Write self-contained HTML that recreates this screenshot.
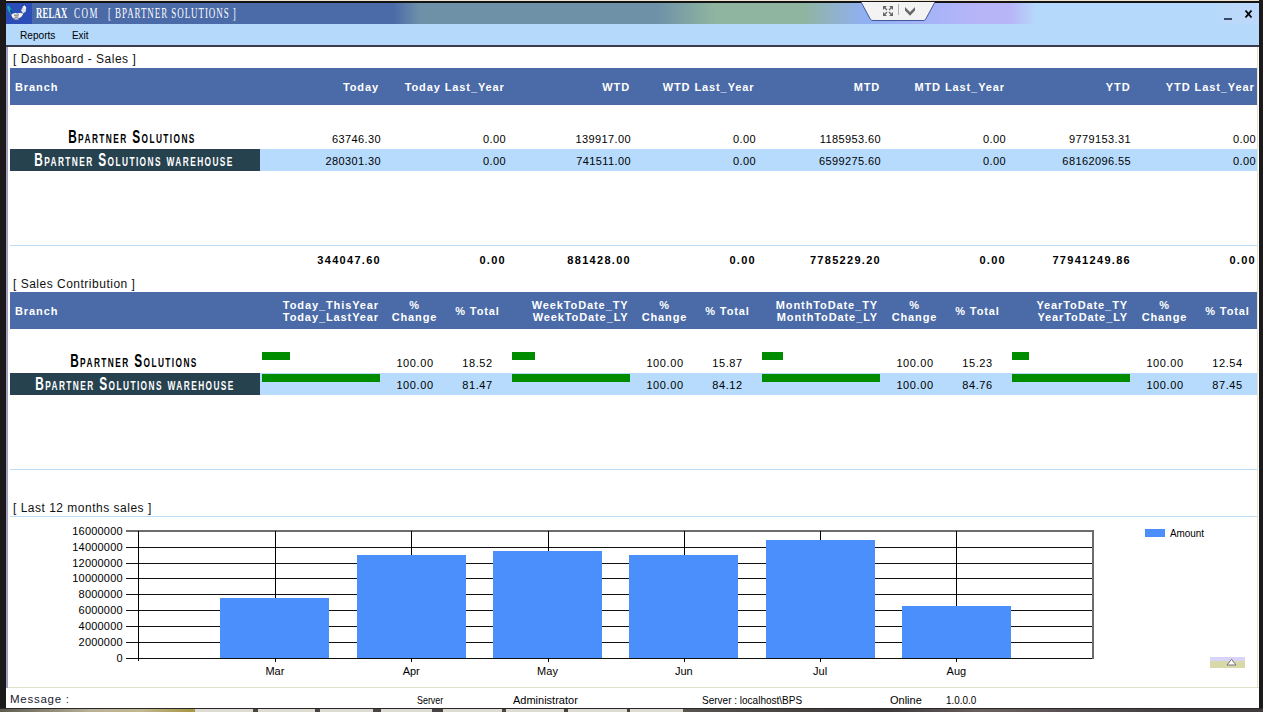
<!DOCTYPE html>
<html><head><meta charset="utf-8">
<style>
*{margin:0;padding:0;box-sizing:border-box}
html,body{width:1263px;height:712px;overflow:hidden;background:#fff;font-family:"Liberation Sans",sans-serif}
.a{position:absolute}
.t{white-space:pre}
</style></head><body>
<div class="a" style="left:0px;top:0px;width:1263px;height:1px;background:#ece4d0;"></div>
<div class="a" style="left:0px;top:1px;width:1263px;height:2px;background:#141414;"></div>
<div class="a" style="left:0px;top:0px;width:6px;height:712px;background:#1b1919;"></div>
<div class="a" style="left:1259px;top:0px;width:4px;height:712px;background:#1b1919;"></div>
<div class="a" style="left:6px;top:3px;width:1253px;height:21px;background:linear-gradient(90deg,#4a6aa8 0px,#4a6aa8 387px,#6e91a8 414px,#6e91a8 650px,#8fb5a0 709px,#8fb5a0 798px,#90b0f0 856px,#a8b4f8 930px,#b8b4f8 974px,#b8b4f8 1004px,#b5d9fb 1030px,#b5d9fb 1205px,#bcd8fa 1225px);"></div>
<div class="a" style="left:6px;top:3px;width:26px;height:21px;background:#2b4db8;"></div>
<svg class="a" style="left:6px;top:3px" width="26" height="21" viewBox="0 0 26 21">
<path d="M1 3.5 L3 2.4 L5 5.5 L6.8 9 L6 11.5 L3.5 9.5 L1.5 6 Z" fill="#18a8c0"/>
<path d="M4.5 6 L6.8 9 L6 11 L4.2 8.5 Z" fill="#103870"/>
<path d="M15 7.5 L17 3.5 L18.6 2.4 L20.2 4.8 L19.8 8.6 L17.2 10.6 Z" fill="#e0e0ea"/>
<path d="M17 3.5 L18.6 2.4 L20.2 4.8 L18.5 6 Z" fill="#f8f8ff"/>
<path d="M14.6 9.6 L17.2 10.4 L16.6 12 L14.2 11.2 Z" fill="#d8c848"/>
<path d="M5.2 11.8 Q8 9.2 11.5 10.4 Q14.5 9.4 17 11.2 Q16 14.2 12.2 15.6 Q8.4 16.2 6.4 14.4 Z" fill="#f6f6f6"/>
<path d="M8 12.2 L13 12 M8.6 14.2 L12.4 14" stroke="#505050" stroke-width="0.9"/>
<path d="M7.5 15.6 Q10 17.4 12.5 16.4" stroke="#a89898" stroke-width="1" fill="none"/>
</svg>
<div class="a t" style="left:36px;transform-origin:0 0;top:5.73px;font-size:14.5px;line-height:14.5px;font-weight:bold;font-family:'Liberation Serif',serif;color:#fff;transform:scaleX(0.6);letter-spacing:0.35px;">RELAX</div>
<div class="a t" style="left:74px;transform-origin:0 0;top:5.73px;font-size:14.5px;line-height:14.5px;font-weight:normal;font-family:'Liberation Serif',serif;color:#fff;transform:scaleX(0.62);letter-spacing:2.4px;">COM</div>
<div class="a t" style="left:108px;transform-origin:0 0;top:5.73px;font-size:14.5px;line-height:14.5px;font-weight:normal;font-family:'Liberation Serif',serif;color:#fff;transform:scaleX(0.62);letter-spacing:1.5px;">[ BPARTNER SOLUTIONS ]</div>
<svg class="a" style="left:858px;top:1px" width="80" height="22" viewBox="0 0 80 22">
<path d="M3 1 L77 1 L67.5 18.5 Q66.5 19.5 65 19.5 L15 19.5 Q13.5 19.5 12.5 18.5 Z" fill="#f3f3f3"/>
<path d="M3 1 L12.5 18.5 Q13.5 19.5 15 19.5 L65 19.5 Q66.5 19.5 67.5 18.5 L77 1" fill="none" stroke="#304a90" stroke-width="0.9"/>
<g fill="#686868">
<path d="M25 5 L29 5 L25 9 Z"/><path d="M35 5 L31 5 L35 9 Z"/><path d="M25 15 L29 15 L25 11 Z"/><path d="M35 15 L31 15 L35 11 Z"/>
</g>
<g stroke="#686868" stroke-width="1.3">
<path d="M26 6 L29 9 M34 6 L31 9 M26 14 L29 11 M34 14 L31 11"/>
</g>
<path d="M40.5 3 L40.5 14" stroke="#b0b0b0" stroke-width="1"/>
<path d="M47 6 L52 11 L57 6 L57 9.5 L52 14.8 L47 9.5 Z" fill="#686868"/>
</svg>
<div class="a" style="left:1224px;top:18px;width:8px;height:2px;background:#3a4868;"></div>
<svg class="a" style="left:1244px;top:9px" width="9" height="10" viewBox="0 0 9 10"><path d="M1.5 1.5 L7.5 8.5 M7.5 1.5 L1.5 8.5" stroke="#000" stroke-width="1.9"/></svg>
<div class="a" style="left:6px;top:24px;width:1253px;height:21px;background:#b5d9fb;"></div>
<div class="a" style="left:6px;top:45px;width:1253px;height:2px;background:#3c3c4c;"></div>
<div class="a t" style="left:20px;transform-origin:0 0;top:29.689999999999998px;font-size:11px;line-height:11px;font-weight:normal;font-family:'Liberation Sans',sans-serif;color:#000;transform:scaleX(0.92);">Reports</div>
<div class="a t" style="left:72px;transform-origin:0 0;top:29.689999999999998px;font-size:11px;line-height:11px;font-weight:normal;font-family:'Liberation Sans',sans-serif;color:#000;transform:scaleX(0.9);">Exit</div>
<div class="a" style="left:6px;top:47px;width:2px;height:641px;background:#a0a0bc;"></div>
<div class="a" style="left:1257px;top:47px;width:1px;height:641px;background:#e4e4cc;"></div>
<div class="a" style="left:1258px;top:47px;width:1px;height:661px;background:#fcfcfc;"></div>
<div class="a t" style="left:13px;transform-origin:0 0;top:52.84px;font-size:12px;line-height:12px;font-weight:normal;font-family:'Liberation Sans',sans-serif;color:#111;letter-spacing:0.5px;">[ Dashboard - Sales ]</div>
<div class="a" style="left:10px;top:68px;width:1247px;height:37px;background:#4a6aa8;"></div>
<div class="a t" style="left:15px;transform-origin:0 0;top:81.69px;font-size:11px;line-height:11px;font-weight:bold;font-family:'Liberation Sans',sans-serif;color:#fff;letter-spacing:0.9px;">Branch</div>
<div class="a t" style="right:884px;transform-origin:100% 0;top:81.69px;font-size:11px;line-height:11px;font-weight:bold;font-family:'Liberation Sans',sans-serif;color:#fff;letter-spacing:0.9px;">Today</div>
<div class="a t" style="right:758.2px;transform-origin:100% 0;top:81.69px;font-size:11px;line-height:11px;font-weight:bold;font-family:'Liberation Sans',sans-serif;color:#fff;letter-spacing:0.9px;">Today Last_Year</div>
<div class="a t" style="right:633px;transform-origin:100% 0;top:81.69px;font-size:11px;line-height:11px;font-weight:bold;font-family:'Liberation Sans',sans-serif;color:#fff;letter-spacing:0.9px;">WTD</div>
<div class="a t" style="right:508.5px;transform-origin:100% 0;top:81.69px;font-size:11px;line-height:11px;font-weight:bold;font-family:'Liberation Sans',sans-serif;color:#fff;letter-spacing:0.9px;">WTD Last_Year</div>
<div class="a t" style="right:382.79999999999995px;transform-origin:100% 0;top:81.69px;font-size:11px;line-height:11px;font-weight:bold;font-family:'Liberation Sans',sans-serif;color:#fff;letter-spacing:0.9px;">MTD</div>
<div class="a t" style="right:258px;transform-origin:100% 0;top:81.69px;font-size:11px;line-height:11px;font-weight:bold;font-family:'Liberation Sans',sans-serif;color:#fff;letter-spacing:0.9px;">MTD Last_Year</div>
<div class="a t" style="right:132.5px;transform-origin:100% 0;top:81.69px;font-size:11px;line-height:11px;font-weight:bold;font-family:'Liberation Sans',sans-serif;color:#fff;letter-spacing:0.9px;">YTD</div>
<div class="a t" style="right:8.400000000000091px;transform-origin:100% 0;top:81.69px;font-size:11px;line-height:11px;font-weight:bold;font-family:'Liberation Sans',sans-serif;color:#fff;letter-spacing:0.9px;">YTD Last_Year</div>
<div class="a" style="left:10px;top:149px;width:1247px;height:22px;background:#b7dbfd;"></div>
<div class="a" style="left:10px;top:149px;width:250px;height:22px;background:#27424f;"></div>
<div class="a t" style="right:882px;transform-origin:100% 0;top:133.69px;font-size:11px;line-height:11px;font-weight:normal;font-family:'Liberation Sans',sans-serif;color:#000;letter-spacing:0.4px;">63746.30</div>
<div class="a t" style="right:882px;transform-origin:100% 0;top:155.69px;font-size:11px;line-height:11px;font-weight:normal;font-family:'Liberation Sans',sans-serif;color:#000;letter-spacing:0.4px;">280301.30</div>
<div class="a t" style="right:882px;transform-origin:100% 0;top:254.69px;font-size:11px;line-height:11px;font-weight:bold;font-family:'Liberation Sans',sans-serif;color:#000;letter-spacing:1.3px;">344047.60</div>
<div class="a t" style="right:757px;transform-origin:100% 0;top:133.69px;font-size:11px;line-height:11px;font-weight:normal;font-family:'Liberation Sans',sans-serif;color:#000;letter-spacing:0.4px;">0.00</div>
<div class="a t" style="right:757px;transform-origin:100% 0;top:155.69px;font-size:11px;line-height:11px;font-weight:normal;font-family:'Liberation Sans',sans-serif;color:#000;letter-spacing:0.4px;">0.00</div>
<div class="a t" style="right:757px;transform-origin:100% 0;top:254.69px;font-size:11px;line-height:11px;font-weight:bold;font-family:'Liberation Sans',sans-serif;color:#000;letter-spacing:1.3px;">0.00</div>
<div class="a t" style="right:632px;transform-origin:100% 0;top:133.69px;font-size:11px;line-height:11px;font-weight:normal;font-family:'Liberation Sans',sans-serif;color:#000;letter-spacing:0.4px;">139917.00</div>
<div class="a t" style="right:632px;transform-origin:100% 0;top:155.69px;font-size:11px;line-height:11px;font-weight:normal;font-family:'Liberation Sans',sans-serif;color:#000;letter-spacing:0.4px;">741511.00</div>
<div class="a t" style="right:632px;transform-origin:100% 0;top:254.69px;font-size:11px;line-height:11px;font-weight:bold;font-family:'Liberation Sans',sans-serif;color:#000;letter-spacing:1.3px;">881428.00</div>
<div class="a t" style="right:507px;transform-origin:100% 0;top:133.69px;font-size:11px;line-height:11px;font-weight:normal;font-family:'Liberation Sans',sans-serif;color:#000;letter-spacing:0.4px;">0.00</div>
<div class="a t" style="right:507px;transform-origin:100% 0;top:155.69px;font-size:11px;line-height:11px;font-weight:normal;font-family:'Liberation Sans',sans-serif;color:#000;letter-spacing:0.4px;">0.00</div>
<div class="a t" style="right:507px;transform-origin:100% 0;top:254.69px;font-size:11px;line-height:11px;font-weight:bold;font-family:'Liberation Sans',sans-serif;color:#000;letter-spacing:1.3px;">0.00</div>
<div class="a t" style="right:382px;transform-origin:100% 0;top:133.69px;font-size:11px;line-height:11px;font-weight:normal;font-family:'Liberation Sans',sans-serif;color:#000;letter-spacing:0.4px;">1185953.60</div>
<div class="a t" style="right:382px;transform-origin:100% 0;top:155.69px;font-size:11px;line-height:11px;font-weight:normal;font-family:'Liberation Sans',sans-serif;color:#000;letter-spacing:0.4px;">6599275.60</div>
<div class="a t" style="right:382px;transform-origin:100% 0;top:254.69px;font-size:11px;line-height:11px;font-weight:bold;font-family:'Liberation Sans',sans-serif;color:#000;letter-spacing:1.3px;">7785229.20</div>
<div class="a t" style="right:257px;transform-origin:100% 0;top:133.69px;font-size:11px;line-height:11px;font-weight:normal;font-family:'Liberation Sans',sans-serif;color:#000;letter-spacing:0.4px;">0.00</div>
<div class="a t" style="right:257px;transform-origin:100% 0;top:155.69px;font-size:11px;line-height:11px;font-weight:normal;font-family:'Liberation Sans',sans-serif;color:#000;letter-spacing:0.4px;">0.00</div>
<div class="a t" style="right:257px;transform-origin:100% 0;top:254.69px;font-size:11px;line-height:11px;font-weight:bold;font-family:'Liberation Sans',sans-serif;color:#000;letter-spacing:1.3px;">0.00</div>
<div class="a t" style="right:132px;transform-origin:100% 0;top:133.69px;font-size:11px;line-height:11px;font-weight:normal;font-family:'Liberation Sans',sans-serif;color:#000;letter-spacing:0.4px;">9779153.31</div>
<div class="a t" style="right:132px;transform-origin:100% 0;top:155.69px;font-size:11px;line-height:11px;font-weight:normal;font-family:'Liberation Sans',sans-serif;color:#000;letter-spacing:0.4px;">68162096.55</div>
<div class="a t" style="right:132px;transform-origin:100% 0;top:254.69px;font-size:11px;line-height:11px;font-weight:bold;font-family:'Liberation Sans',sans-serif;color:#000;letter-spacing:1.3px;">77941249.86</div>
<div class="a t" style="right:7px;transform-origin:100% 0;top:133.69px;font-size:11px;line-height:11px;font-weight:normal;font-family:'Liberation Sans',sans-serif;color:#000;letter-spacing:0.4px;">0.00</div>
<div class="a t" style="right:7px;transform-origin:100% 0;top:155.69px;font-size:11px;line-height:11px;font-weight:normal;font-family:'Liberation Sans',sans-serif;color:#000;letter-spacing:0.4px;">0.00</div>
<div class="a t" style="right:7px;transform-origin:100% 0;top:254.69px;font-size:11px;line-height:11px;font-weight:bold;font-family:'Liberation Sans',sans-serif;color:#000;letter-spacing:1.3px;">0.00</div>
<div class="a t" style="left:131.75px;transform-origin:50% 0;top:128.04px;font-size:18.5px;line-height:18.5px;font-weight:bold;font-family:'Liberation Sans',sans-serif;color:#000;transform:translateX(-50%) scaleX(0.64);letter-spacing:2.2px;font-variant:small-caps;">Bpartner Solutions</div>
<div class="a t" style="left:133.5px;transform-origin:50% 0;top:150.64000000000001px;font-size:18.5px;line-height:18.5px;font-weight:bold;font-family:'Liberation Sans',sans-serif;color:#fff;transform:translateX(-50%) scaleX(0.64);letter-spacing:2.2px;font-variant:small-caps;">Bpartner Solutions warehouse</div>
<div class="a" style="left:10px;top:245px;width:1247px;height:1px;background:#bcdcf6;"></div>
<div class="a t" style="left:13px;transform-origin:0 0;top:277.84px;font-size:12px;line-height:12px;font-weight:normal;font-family:'Liberation Sans',sans-serif;color:#111;letter-spacing:0.5px;">[ Sales Contribution ]</div>
<div class="a" style="left:10px;top:292px;width:1247px;height:37px;background:#4a6aa8;"></div>
<div class="a t" style="left:15px;transform-origin:0 0;top:305.69px;font-size:11px;line-height:11px;font-weight:bold;font-family:'Liberation Sans',sans-serif;color:#fff;letter-spacing:0.9px;">Branch</div>
<div class="a" style="left:10px;top:373px;width:1247px;height:22px;background:#b7dbfd;"></div>
<div class="a" style="left:10px;top:373px;width:250px;height:22px;background:#27424f;"></div>
<div class="a t" style="right:884px;transform-origin:100% 0;top:300.19px;font-size:11px;line-height:11px;font-weight:bold;font-family:'Liberation Sans',sans-serif;color:#fff;letter-spacing:0.9px;">Today_ThisYear</div>
<div class="a t" style="right:884px;transform-origin:100% 0;top:312.19px;font-size:11px;line-height:11px;font-weight:bold;font-family:'Liberation Sans',sans-serif;color:#fff;letter-spacing:0.9px;">Today_LastYear</div>
<div class="a t" style="left:414.5px;transform-origin:50% 0;top:300.19px;font-size:11px;line-height:11px;font-weight:bold;font-family:'Liberation Sans',sans-serif;color:#fff;transform:translateX(-50%) scaleX(1.0);letter-spacing:0.9px;">%</div>
<div class="a t" style="left:414.5px;transform-origin:50% 0;top:312.19px;font-size:11px;line-height:11px;font-weight:bold;font-family:'Liberation Sans',sans-serif;color:#fff;transform:translateX(-50%) scaleX(1.0);letter-spacing:0.9px;">Change</div>
<div class="a t" style="left:477.5px;transform-origin:50% 0;top:306.39px;font-size:11px;line-height:11px;font-weight:bold;font-family:'Liberation Sans',sans-serif;color:#fff;transform:translateX(-50%) scaleX(1.0);letter-spacing:0.9px;">% Total</div>
<div class="a" style="left:262px;top:352px;width:28px;height:8px;background:#008c00;"></div>
<div class="a" style="left:262px;top:374px;width:118px;height:8px;background:#008c00;"></div>
<div class="a t" style="left:415px;transform-origin:50% 0;top:357.69px;font-size:11px;line-height:11px;font-weight:normal;font-family:'Liberation Sans',sans-serif;color:#000;transform:translateX(-50%) scaleX(1.0);letter-spacing:0.6px;">100.00</div>
<div class="a t" style="left:477.5px;transform-origin:50% 0;top:357.69px;font-size:11px;line-height:11px;font-weight:normal;font-family:'Liberation Sans',sans-serif;color:#000;transform:translateX(-50%) scaleX(1.0);letter-spacing:0.6px;">18.52</div>
<div class="a t" style="left:415px;transform-origin:50% 0;top:379.69px;font-size:11px;line-height:11px;font-weight:normal;font-family:'Liberation Sans',sans-serif;color:#000;transform:translateX(-50%) scaleX(1.0);letter-spacing:0.6px;">100.00</div>
<div class="a t" style="left:477.5px;transform-origin:50% 0;top:379.69px;font-size:11px;line-height:11px;font-weight:normal;font-family:'Liberation Sans',sans-serif;color:#000;transform:translateX(-50%) scaleX(1.0);letter-spacing:0.6px;">81.47</div>
<div class="a t" style="right:634.5px;transform-origin:100% 0;top:300.19px;font-size:11px;line-height:11px;font-weight:bold;font-family:'Liberation Sans',sans-serif;color:#fff;letter-spacing:0.9px;">WeekToDate_TY</div>
<div class="a t" style="right:634.5px;transform-origin:100% 0;top:312.19px;font-size:11px;line-height:11px;font-weight:bold;font-family:'Liberation Sans',sans-serif;color:#fff;letter-spacing:0.9px;">WeekToDate_LY</div>
<div class="a t" style="left:664.5px;transform-origin:50% 0;top:300.19px;font-size:11px;line-height:11px;font-weight:bold;font-family:'Liberation Sans',sans-serif;color:#fff;transform:translateX(-50%) scaleX(1.0);letter-spacing:0.9px;">%</div>
<div class="a t" style="left:664.5px;transform-origin:50% 0;top:312.19px;font-size:11px;line-height:11px;font-weight:bold;font-family:'Liberation Sans',sans-serif;color:#fff;transform:translateX(-50%) scaleX(1.0);letter-spacing:0.9px;">Change</div>
<div class="a t" style="left:727.5px;transform-origin:50% 0;top:306.39px;font-size:11px;line-height:11px;font-weight:bold;font-family:'Liberation Sans',sans-serif;color:#fff;transform:translateX(-50%) scaleX(1.0);letter-spacing:0.9px;">% Total</div>
<div class="a" style="left:512px;top:352px;width:23px;height:8px;background:#008c00;"></div>
<div class="a" style="left:512px;top:374px;width:118px;height:8px;background:#008c00;"></div>
<div class="a t" style="left:665px;transform-origin:50% 0;top:357.69px;font-size:11px;line-height:11px;font-weight:normal;font-family:'Liberation Sans',sans-serif;color:#000;transform:translateX(-50%) scaleX(1.0);letter-spacing:0.6px;">100.00</div>
<div class="a t" style="left:727.5px;transform-origin:50% 0;top:357.69px;font-size:11px;line-height:11px;font-weight:normal;font-family:'Liberation Sans',sans-serif;color:#000;transform:translateX(-50%) scaleX(1.0);letter-spacing:0.6px;">15.87</div>
<div class="a t" style="left:665px;transform-origin:50% 0;top:379.69px;font-size:11px;line-height:11px;font-weight:normal;font-family:'Liberation Sans',sans-serif;color:#000;transform:translateX(-50%) scaleX(1.0);letter-spacing:0.6px;">100.00</div>
<div class="a t" style="left:727.5px;transform-origin:50% 0;top:379.69px;font-size:11px;line-height:11px;font-weight:normal;font-family:'Liberation Sans',sans-serif;color:#000;transform:translateX(-50%) scaleX(1.0);letter-spacing:0.6px;">84.12</div>
<div class="a t" style="right:385px;transform-origin:100% 0;top:300.19px;font-size:11px;line-height:11px;font-weight:bold;font-family:'Liberation Sans',sans-serif;color:#fff;letter-spacing:0.9px;">MonthToDate_TY</div>
<div class="a t" style="right:385px;transform-origin:100% 0;top:312.19px;font-size:11px;line-height:11px;font-weight:bold;font-family:'Liberation Sans',sans-serif;color:#fff;letter-spacing:0.9px;">MonthToDate_LY</div>
<div class="a t" style="left:914.5px;transform-origin:50% 0;top:300.19px;font-size:11px;line-height:11px;font-weight:bold;font-family:'Liberation Sans',sans-serif;color:#fff;transform:translateX(-50%) scaleX(1.0);letter-spacing:0.9px;">%</div>
<div class="a t" style="left:914.5px;transform-origin:50% 0;top:312.19px;font-size:11px;line-height:11px;font-weight:bold;font-family:'Liberation Sans',sans-serif;color:#fff;transform:translateX(-50%) scaleX(1.0);letter-spacing:0.9px;">Change</div>
<div class="a t" style="left:977.5px;transform-origin:50% 0;top:306.39px;font-size:11px;line-height:11px;font-weight:bold;font-family:'Liberation Sans',sans-serif;color:#fff;transform:translateX(-50%) scaleX(1.0);letter-spacing:0.9px;">% Total</div>
<div class="a" style="left:762px;top:352px;width:21px;height:8px;background:#008c00;"></div>
<div class="a" style="left:762px;top:374px;width:118px;height:8px;background:#008c00;"></div>
<div class="a t" style="left:915px;transform-origin:50% 0;top:357.69px;font-size:11px;line-height:11px;font-weight:normal;font-family:'Liberation Sans',sans-serif;color:#000;transform:translateX(-50%) scaleX(1.0);letter-spacing:0.6px;">100.00</div>
<div class="a t" style="left:977.5px;transform-origin:50% 0;top:357.69px;font-size:11px;line-height:11px;font-weight:normal;font-family:'Liberation Sans',sans-serif;color:#000;transform:translateX(-50%) scaleX(1.0);letter-spacing:0.6px;">15.23</div>
<div class="a t" style="left:915px;transform-origin:50% 0;top:379.69px;font-size:11px;line-height:11px;font-weight:normal;font-family:'Liberation Sans',sans-serif;color:#000;transform:translateX(-50%) scaleX(1.0);letter-spacing:0.6px;">100.00</div>
<div class="a t" style="left:977.5px;transform-origin:50% 0;top:379.69px;font-size:11px;line-height:11px;font-weight:normal;font-family:'Liberation Sans',sans-serif;color:#000;transform:translateX(-50%) scaleX(1.0);letter-spacing:0.6px;">84.76</div>
<div class="a t" style="right:135px;transform-origin:100% 0;top:300.19px;font-size:11px;line-height:11px;font-weight:bold;font-family:'Liberation Sans',sans-serif;color:#fff;letter-spacing:0.9px;">YearToDate_TY</div>
<div class="a t" style="right:135px;transform-origin:100% 0;top:312.19px;font-size:11px;line-height:11px;font-weight:bold;font-family:'Liberation Sans',sans-serif;color:#fff;letter-spacing:0.9px;">YearToDate_LY</div>
<div class="a t" style="left:1164.5px;transform-origin:50% 0;top:300.19px;font-size:11px;line-height:11px;font-weight:bold;font-family:'Liberation Sans',sans-serif;color:#fff;transform:translateX(-50%) scaleX(1.0);letter-spacing:0.9px;">%</div>
<div class="a t" style="left:1164.5px;transform-origin:50% 0;top:312.19px;font-size:11px;line-height:11px;font-weight:bold;font-family:'Liberation Sans',sans-serif;color:#fff;transform:translateX(-50%) scaleX(1.0);letter-spacing:0.9px;">Change</div>
<div class="a t" style="left:1227.5px;transform-origin:50% 0;top:306.39px;font-size:11px;line-height:11px;font-weight:bold;font-family:'Liberation Sans',sans-serif;color:#fff;transform:translateX(-50%) scaleX(1.0);letter-spacing:0.9px;">% Total</div>
<div class="a" style="left:1012px;top:352px;width:17px;height:8px;background:#008c00;"></div>
<div class="a" style="left:1012px;top:374px;width:118px;height:8px;background:#008c00;"></div>
<div class="a t" style="left:1165px;transform-origin:50% 0;top:357.69px;font-size:11px;line-height:11px;font-weight:normal;font-family:'Liberation Sans',sans-serif;color:#000;transform:translateX(-50%) scaleX(1.0);letter-spacing:0.6px;">100.00</div>
<div class="a t" style="left:1227.5px;transform-origin:50% 0;top:357.69px;font-size:11px;line-height:11px;font-weight:normal;font-family:'Liberation Sans',sans-serif;color:#000;transform:translateX(-50%) scaleX(1.0);letter-spacing:0.6px;">12.54</div>
<div class="a t" style="left:1165px;transform-origin:50% 0;top:379.69px;font-size:11px;line-height:11px;font-weight:normal;font-family:'Liberation Sans',sans-serif;color:#000;transform:translateX(-50%) scaleX(1.0);letter-spacing:0.6px;">100.00</div>
<div class="a t" style="left:1227.5px;transform-origin:50% 0;top:379.69px;font-size:11px;line-height:11px;font-weight:normal;font-family:'Liberation Sans',sans-serif;color:#000;transform:translateX(-50%) scaleX(1.0);letter-spacing:0.6px;">87.45</div>
<div class="a t" style="left:133.5px;transform-origin:50% 0;top:351.64px;font-size:18.5px;line-height:18.5px;font-weight:bold;font-family:'Liberation Sans',sans-serif;color:#000;transform:translateX(-50%) scaleX(0.64);letter-spacing:2.2px;font-variant:small-caps;">Bpartner Solutions</div>
<div class="a t" style="left:135.2px;transform-origin:50% 0;top:374.94px;font-size:18.5px;line-height:18.5px;font-weight:bold;font-family:'Liberation Sans',sans-serif;color:#fff;transform:translateX(-50%) scaleX(0.64);letter-spacing:2.2px;font-variant:small-caps;">Bpartner Solutions warehouse</div>
<div class="a" style="left:10px;top:469px;width:1247px;height:1px;background:#bcdcf6;"></div>
<div class="a t" style="left:13px;transform-origin:0 0;top:501.84px;font-size:12px;line-height:12px;font-weight:normal;font-family:'Liberation Sans',sans-serif;color:#111;letter-spacing:0.5px;">[ Last 12 months sales ]</div>
<div class="a" style="left:10px;top:516px;width:1247px;height:1px;background:#bcdcf6;"></div>
<div class="a" style="left:126px;top:530px;width:968px;height:2px;background:#6c6c6c;"></div>
<div class="a t" style="right:1140.2px;transform-origin:100% 0;top:525.69px;font-size:11px;line-height:11px;font-weight:normal;font-family:'Liberation Sans',sans-serif;color:#000;letter-spacing:0.2px;">16000000</div>
<div class="a" style="left:126px;top:547px;width:967px;height:1px;background:#111;"></div>
<div class="a t" style="right:1140.2px;transform-origin:100% 0;top:542.19px;font-size:11px;line-height:11px;font-weight:normal;font-family:'Liberation Sans',sans-serif;color:#000;letter-spacing:0.2px;">14000000</div>
<div class="a" style="left:126px;top:563px;width:967px;height:1px;background:#111;"></div>
<div class="a t" style="right:1140.2px;transform-origin:100% 0;top:558.19px;font-size:11px;line-height:11px;font-weight:normal;font-family:'Liberation Sans',sans-serif;color:#000;letter-spacing:0.2px;">12000000</div>
<div class="a" style="left:126px;top:578px;width:967px;height:1px;background:#111;"></div>
<div class="a t" style="right:1140.2px;transform-origin:100% 0;top:573.19px;font-size:11px;line-height:11px;font-weight:normal;font-family:'Liberation Sans',sans-serif;color:#000;letter-spacing:0.2px;">10000000</div>
<div class="a" style="left:126px;top:594px;width:967px;height:1px;background:#111;"></div>
<div class="a t" style="right:1140.2px;transform-origin:100% 0;top:589.19px;font-size:11px;line-height:11px;font-weight:normal;font-family:'Liberation Sans',sans-serif;color:#000;letter-spacing:0.2px;">8000000</div>
<div class="a" style="left:126px;top:610px;width:967px;height:1px;background:#111;"></div>
<div class="a t" style="right:1140.2px;transform-origin:100% 0;top:605.19px;font-size:11px;line-height:11px;font-weight:normal;font-family:'Liberation Sans',sans-serif;color:#000;letter-spacing:0.2px;">6000000</div>
<div class="a" style="left:126px;top:626px;width:967px;height:1px;background:#111;"></div>
<div class="a t" style="right:1140.2px;transform-origin:100% 0;top:621.19px;font-size:11px;line-height:11px;font-weight:normal;font-family:'Liberation Sans',sans-serif;color:#000;letter-spacing:0.2px;">4000000</div>
<div class="a" style="left:126px;top:642px;width:967px;height:1px;background:#111;"></div>
<div class="a t" style="right:1140.2px;transform-origin:100% 0;top:637.19px;font-size:11px;line-height:11px;font-weight:normal;font-family:'Liberation Sans',sans-serif;color:#000;letter-spacing:0.2px;">2000000</div>
<div class="a" style="left:126px;top:658px;width:967px;height:1px;background:#111;"></div>
<div class="a t" style="right:1140.2px;transform-origin:100% 0;top:653.19px;font-size:11px;line-height:11px;font-weight:normal;font-family:'Liberation Sans',sans-serif;color:#000;letter-spacing:0.2px;">0</div>
<div class="a" style="left:138px;top:531px;width:1px;height:130px;background:#000;"></div>
<div class="a" style="left:1092px;top:530px;width:2px;height:129px;background:#6c6c6c;"></div>
<div class="a" style="left:275px;top:531px;width:1px;height:131px;background:#000;"></div>
<div class="a" style="left:220px;top:598px;width:109px;height:60px;background:#4a8ffc;"></div>
<div class="a t" style="left:274.9px;transform-origin:50% 0;top:665.69px;font-size:11px;line-height:11px;font-weight:normal;font-family:'Liberation Sans',sans-serif;color:#000;transform:translateX(-50%) scaleX(1.0);">Mar</div>
<div class="a" style="left:411px;top:531px;width:1px;height:131px;background:#000;"></div>
<div class="a" style="left:357px;top:555px;width:109px;height:103px;background:#4a8ffc;"></div>
<div class="a t" style="left:411.20000000000005px;transform-origin:50% 0;top:665.69px;font-size:11px;line-height:11px;font-weight:normal;font-family:'Liberation Sans',sans-serif;color:#000;transform:translateX(-50%) scaleX(1.0);">Apr</div>
<div class="a" style="left:548px;top:531px;width:1px;height:131px;background:#000;"></div>
<div class="a" style="left:493px;top:551px;width:109px;height:107px;background:#4a8ffc;"></div>
<div class="a t" style="left:547.5px;transform-origin:50% 0;top:665.69px;font-size:11px;line-height:11px;font-weight:normal;font-family:'Liberation Sans',sans-serif;color:#000;transform:translateX(-50%) scaleX(1.0);">May</div>
<div class="a" style="left:684px;top:531px;width:1px;height:131px;background:#000;"></div>
<div class="a" style="left:629px;top:555px;width:109px;height:103px;background:#4a8ffc;"></div>
<div class="a t" style="left:683.8000000000001px;transform-origin:50% 0;top:665.69px;font-size:11px;line-height:11px;font-weight:normal;font-family:'Liberation Sans',sans-serif;color:#000;transform:translateX(-50%) scaleX(1.0);">Jun</div>
<div class="a" style="left:820px;top:531px;width:1px;height:131px;background:#000;"></div>
<div class="a" style="left:766px;top:540px;width:109px;height:118px;background:#4a8ffc;"></div>
<div class="a t" style="left:820.1px;transform-origin:50% 0;top:665.69px;font-size:11px;line-height:11px;font-weight:normal;font-family:'Liberation Sans',sans-serif;color:#000;transform:translateX(-50%) scaleX(1.0);">Jul</div>
<div class="a" style="left:956px;top:531px;width:1px;height:131px;background:#000;"></div>
<div class="a" style="left:902px;top:606px;width:109px;height:52px;background:#4a8ffc;"></div>
<div class="a t" style="left:956.4000000000001px;transform-origin:50% 0;top:665.69px;font-size:11px;line-height:11px;font-weight:normal;font-family:'Liberation Sans',sans-serif;color:#000;transform:translateX(-50%) scaleX(1.0);">Aug</div>
<div class="a" style="left:1145px;top:529px;width:20px;height:8px;background:#4a8ffc;"></div>
<div class="a t" style="left:1170px;transform-origin:0 0;top:527.69px;font-size:11px;line-height:11px;font-weight:normal;font-family:'Liberation Sans',sans-serif;color:#000;transform:scaleX(0.9);">Amount</div>
<div class="a" style="left:1210px;top:657px;width:35px;height:4px;background:#d8d4f8;"></div>
<div class="a" style="left:1210px;top:661px;width:35px;height:7px;background:#d8d8a8;"></div>
<svg class="a" style="left:1226px;top:658px" width="12" height="8" viewBox="0 0 12 8"><path d="M1 7 L5.5 1.2 L10 7 Z" fill="#fff" stroke="#707080" stroke-width="1"/></svg>
<div class="a" style="left:8px;top:687px;width:1251px;height:1px;background:#e0e0c8;"></div>
<div class="a t" style="left:10px;transform-origin:0 0;top:694.27px;font-size:11.5px;line-height:11.5px;font-weight:normal;font-family:'Liberation Sans',sans-serif;color:#202030;letter-spacing:0.75px;">Message :</div>
<div class="a t" style="left:417px;transform-origin:0 0;top:695.19px;font-size:11px;line-height:11px;font-weight:normal;font-family:'Liberation Sans',sans-serif;color:#000;transform:scaleX(0.81);">Server</div>
<div class="a t" style="left:513px;transform-origin:0 0;top:695.19px;font-size:11px;line-height:11px;font-weight:normal;font-family:'Liberation Sans',sans-serif;color:#000;">Administrator</div>
<div class="a t" style="left:702px;transform-origin:0 0;top:695.19px;font-size:11px;line-height:11px;font-weight:normal;font-family:'Liberation Sans',sans-serif;color:#000;transform:scaleX(0.91);">Server : localhost\BPS</div>
<div class="a t" style="left:890px;transform-origin:0 0;top:695.19px;font-size:11px;line-height:11px;font-weight:normal;font-family:'Liberation Sans',sans-serif;color:#000;">Online</div>
<div class="a t" style="left:946px;transform-origin:0 0;top:695.19px;font-size:11px;line-height:11px;font-weight:normal;font-family:'Liberation Sans',sans-serif;color:#000;transform:scaleX(0.9);">1.0.0.0</div>
<div class="a" style="left:0px;top:708px;width:1263px;height:1px;background:#2a2828;"></div>
<div class="a" style="left:0px;top:709px;width:1263px;height:3px;background:#4a4444;"></div>
<div class="a" style="left:0px;top:709px;width:195px;height:3px;background:linear-gradient(90deg,#5c5a50,#b8b098 90px,#c0b890 140px,#a89848 190px);"></div>
<div class="a" style="left:195px;top:709px;width:58px;height:3px;background:#dcdcd2;"></div>
<div class="a" style="left:258px;top:709px;width:57px;height:3px;background:#dcdcd2;"></div>
<div class="a" style="left:320px;top:709px;width:53px;height:3px;background:#dcdcd2;"></div>
<div class="a" style="left:381px;top:709px;width:51px;height:3px;background:#dcdcd2;"></div>
<div class="a" style="left:443px;top:709px;width:59px;height:3px;background:#dcdcd2;"></div>
<div class="a" style="left:506px;top:709px;width:58px;height:3px;background:#dcdcd2;"></div>
<div class="a" style="left:568px;top:709px;width:59px;height:3px;background:#dcdcd2;"></div>
<div class="a" style="left:630px;top:709px;width:53px;height:3px;background:#dcdcd2;"></div>
<div class="a" style="left:683px;top:709px;width:580px;height:3px;background:linear-gradient(90deg,#5a5450,#3c3838 200px,#6a6060 300px,#403c3c 500px);"></div>
</body></html>
